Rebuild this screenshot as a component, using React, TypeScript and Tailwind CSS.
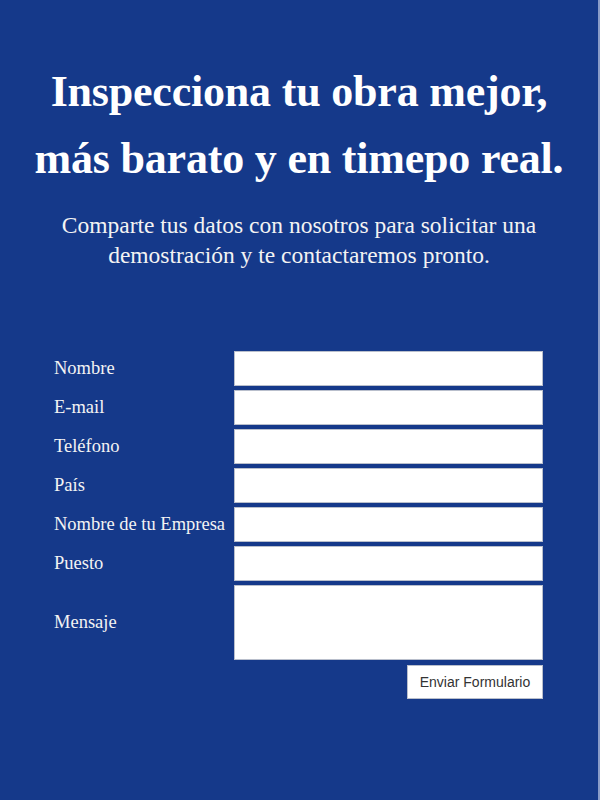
const FIELDS = ['Nombre', 'E-mail', 'Teléfono', 'País', 'Nombre de tu Empresa', 'Puesto'];

export default function App() {
  return (
    <div className="w-[600px] h-[800px] bg-[#15398a] border-r-2 border-[#8a9cc8] font-['Liberation_Serif',serif] text-white">
      <div className="pt-[58px] text-center">
        <h1 className="text-[44px] leading-[67px] font-bold tracking-[-0.2px]">
          Inspecciona tu obra mejor,
          <br />
          más barato y en timepo real.
        </h1>
        <p className="mt-[18px] text-[23.5px] leading-[30px] text-[#f3f3f3]">
          Comparte tus datos con nosotros para solicitar una
          <br />
          demostración y te contactaremos pronto.
        </p>
      </div>

      <form className="mt-[81px] ml-[54px] w-[489px] flex flex-col gap-[4px]">
        {FIELDS.map((f) => (
          <div key={f} className="flex items-center">
            <label className="w-[180px] text-[18.5px] text-[#f3f3f3]">{f}</label>
            <input className="flex-1 h-[35px] bg-white border border-[#b9bfcc]" />
          </div>
        ))}
        <div className="flex items-center">
          <label className="w-[180px] text-[18.5px] text-[#f3f3f3]">Mensaje</label>
          <textarea className="flex-1 h-[75px] bg-white border border-[#b9bfcc] resize-none" />
        </div>
        <div className="flex justify-end mt-[1px]">
          <button
            type="button"
            className="w-[136px] h-[34px] bg-white border border-[#b9bfcc] text-[14px] text-[#333] font-['Liberation_Sans',sans-serif]"
          >
            Enviar Formulario
          </button>
        </div>
      </form>
    </div>
  );
}
